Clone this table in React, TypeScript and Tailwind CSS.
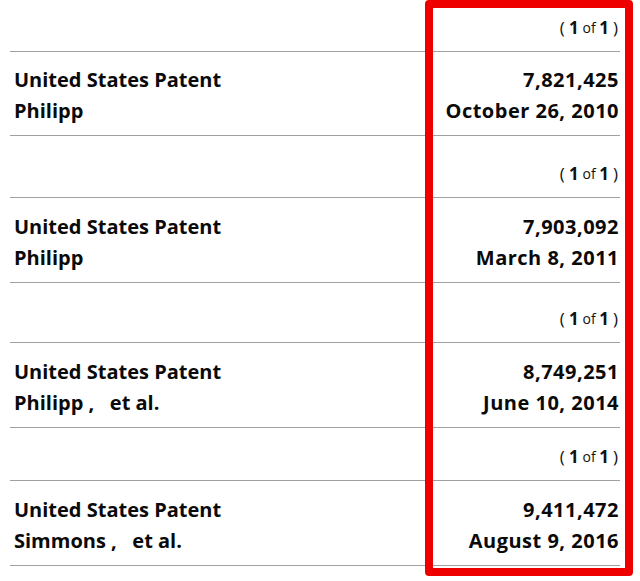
import React from "react";

const font = { fontFamily: '"Open Sans", "Noto Sans", "Liberation Sans", sans-serif' };

function Pager({ h }: { h: string }) {
  return (
    <div className={`flex items-end justify-end border-b border-[#a0a0a0] pb-[12px] pr-[2px] leading-[22px] text-[#111] ${h}`}>
      <span className="text-[17px] font-normal">(&nbsp;</span>
      <span className="text-[17px] font-bold">1</span>
      <span className="text-[14px] font-normal">&nbsp;of&nbsp;</span>
      <span className="text-[17px] font-bold">1</span>
      <span className="pl-[4px] text-[17px] font-normal">)</span>
    </div>
  );
}

function Patent({ h, who, num, date }: { h: string; who: string; num: string; date: string }) {
  return (
    <div className={`flex items-center justify-between border-b border-[#a0a0a0] pt-[3px] pl-[4px] pr-[1px] text-[20px] font-bold leading-[31px] text-[#0a0a0a] ${h}`}>
      <div className="flex flex-col">
        <span>United States Patent</span>
        <span className="whitespace-pre">{who}</span>
      </div>
      <div className="flex flex-col items-end tracking-[0.5px]">
        <span>{num}</span>
        <span>{date}</span>
      </div>
    </div>
  );
}

export default function App() {
  return (
    <div className="relative h-[581px] w-[640px] overflow-hidden bg-white" style={font}>
      <div className="ml-[10px] w-[610px]">
        <Pager h="h-[52px]" />
        <Patent h="h-[84px]" who="Philipp" num="7,821,425" date="October 26, 2010" />
        <Pager h="h-[62px]" />
        <Patent h="h-[85px]" who="Philipp" num="7,903,092" date="March 8, 2011" />
        <Pager h="h-[60px]" />
        <Patent h="h-[85px]" who="Philipp ,   et al." num="8,749,251" date="June 10, 2014" />
        <Pager h="h-[53px]" />
        <Patent h="h-[85px]" who="Simmons ,   et al." num="9,411,472" date="August 9, 2016" />
      </div>
      <div className="pointer-events-none absolute left-[425px] top-0 h-[576px] w-[208px] rounded-[4px] border-[8px] border-[#ee0000]" />
    </div>
  );
}
